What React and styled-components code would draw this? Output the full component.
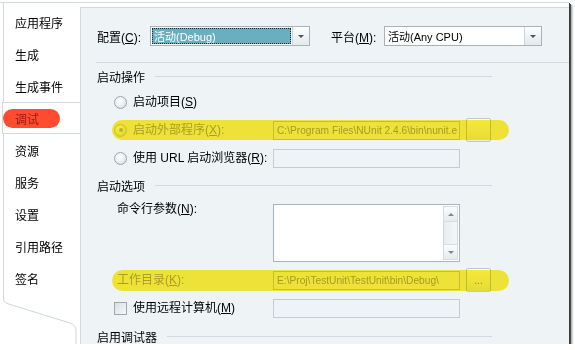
import React from "react";
import styled, { createGlobalStyle, css } from "styled-components";

const GlobalStyle = createGlobalStyle`
  html, body {
    margin: 0;
    padding: 0;
    background: #fff;
  }
  body {
    font-family: "Liberation Sans", "Noto Sans CJK SC", sans-serif;
    font-size: 12px;
    color: #000;
  }
`;

const Window = styled.div`
  width: 569px;
  height: 341px;
  margin-top: 2px;
  border-top: 1px solid #d3dadf;
  display: flex;
  background: #fff;
  box-shadow: 1px 1px 0 #3a3a3a, 2px 2px 0 #4a4a4a, 3px 3px 2px rgba(0, 0, 0, 0.45);
  overflow: hidden;
`;

const Sidebar = styled.nav`
  width: 80px;
  flex: none;
  display: flex;
  flex-direction: column;
`;

const TabList = styled.div`
  margin-left: 3px;
  padding-top: 3px;
  border-left: 1px solid #d3dadf;
  display: flex;
  flex-direction: column;
`;

const Tab = styled.div`
  height: 32px;
  box-sizing: border-box;
  display: flex;
  align-items: center;
  padding-left: 11px;
  white-space: nowrap;
  ${(p) =>
    p.$active &&
    css`
      margin-left: -2px;
      padding-left: 0;
      border: 1px solid #d3dadf;
      border-right: none;
      background: #fff;
    `}
`;

const Marker = styled.span`
  display: inline-flex;
  align-items: center;
  height: 19px;
  padding: 0 21px 0 12px;
  border-radius: 10px;
  background: #ff4b2f;
  color: #8e1f10;
`;

const SidebarFoot = styled.svg`
  display: block;
  flex: 1;
  width: 80px;
`;

const Panel = styled.main`
  flex: 1;
  margin-top: 4px;
  border-top: 1px solid #d3dadf;
  border-left: 1px solid #d3dadf;
  background: #eef3f6;
  padding: 18px 0 0 16px;
  overflow: hidden;
  display: flex;
  flex-direction: column;
`;

const TopRow = styled.div`
  display: flex;
  align-items: center;
  height: 20px;
`;

const Label = styled.span`
  width: ${(p) => p.$w || 53}px;
  margin-left: ${(p) => p.$ml || 0}px;
  flex: none;
  white-space: nowrap;
  color: ${(p) => (p.$disabled ? "#a9a9a9" : "#000")};
`;

const Select = styled.div`
  width: ${(p) => p.$w}px;
  height: 20px;
  box-sizing: border-box;
  border: 1px solid #a9b2ba;
  background: #fff;
  display: flex;
  font-size: 11px;
`;

const SelectValue = styled.div`
  flex: 1;
  display: flex;
  align-items: center;
  padding-left: 3px;
  white-space: nowrap;
  ${(p) =>
    p.$focused &&
    css`
      margin: 1px;
      padding-left: 2px;
      background: #69afc0;
      color: #fff;
      outline: 1px dotted #1a2a30;
      outline-offset: -1px;
    `}
`;

const SelectArrow = styled.div`
  width: 16px;
  flex: none;
  border-left: 1px solid #cdd4d9;
  background: linear-gradient(#fdfefe, #e4e9ec);
  display: flex;
  align-items: center;
  justify-content: center;
  &::after {
    content: "";
    border-left: 3px solid transparent;
    border-right: 3px solid transparent;
    border-top: 3px solid #4b5358;
  }
`;

const Divider = styled.div`
  margin: 16px 0 0 -1px;
  height: 1px;
  background: #d2dadf;
`;

const Section = styled.div`
  width: 395px;
  height: 16px;
  margin-top: ${(p) => p.$mt}px;
  display: flex;
  align-items: center;
  white-space: nowrap;
  &::after {
    content: "";
    flex: 1;
    height: 1px;
    margin-left: 10px;
    background: #d2dadf;
  }
`;

const Row = styled.div`
  position: relative;
  display: flex;
  align-items: ${(p) => (p.$top ? "flex-start" : "center")};
  height: ${(p) => p.$h}px;
  margin-top: ${(p) => p.$mt}px;
`;

const Lead = styled.div`
  width: 176px;
  flex: none;
  box-sizing: border-box;
  padding-left: ${(p) => p.$pl ?? 17}px;
  display: flex;
  align-items: center;
  white-space: nowrap;
  color: ${(p) => (p.$disabled ? "#a9a9a9" : "#000")};
  line-height: 12px;
`;

const Radio = styled.span`
  width: 13px;
  height: 13px;
  margin-right: 6px;
  box-sizing: border-box;
  border-radius: 50%;
  border: 1px solid ${(p) => (p.$disabled ? "#c5ccd1" : "#9ba6ae")};
  background: radial-gradient(circle at 40% 35%, #ffffff 0%, #eef1f3 45%, #cdd4d9 100%);
  display: flex;
  align-items: center;
  justify-content: center;
  &::after {
    content: "";
    display: ${(p) => (p.$checked ? "block" : "none")};
    width: 4px;
    height: 4px;
    border-radius: 50%;
    background: #b8bec3;
  }
`;

const Check = styled.span`
  width: 13px;
  height: 13px;
  margin-right: 6px;
  box-sizing: border-box;
  border: 1px solid #9ca7af;
  background: linear-gradient(135deg, #d9dfe3, #f6f8f9);
`;

const Field = styled.div`
  width: 187px;
  height: ${(p) => p.$h || 19}px;
  flex: none;
  box-sizing: border-box;
  border: 1px solid ${(p) => (p.$white ? "#aab4bc" : "#c4ccd2")};
  background: ${(p) => (p.$white ? "#fff" : "transparent")};
  padding-left: 3px;
  display: flex;
  align-items: ${(p) => (p.$white ? "stretch" : "center")};
  justify-content: ${(p) => (p.$white ? "flex-end" : "flex-start")};
  overflow: hidden;
  white-space: nowrap;
  font-size: 10.2px;
  color: #a6a6a6;
  margin-top: ${(p) => p.$mt || 0}px;
`;

const Scrollbar = styled.div`
  width: 15px;
  margin: 1px;
  box-sizing: border-box;
  border: 1px solid #d0d6db;
  background: linear-gradient(90deg, #e9edf0, #f4f6f7);
  display: flex;
  flex-direction: column;
  justify-content: space-between;
`;

const ScrollBtn = styled.div`
  height: 14px;
  background: linear-gradient(#fbfcfc, #e6eaed);
  border: 1px solid #d6dce0;
  margin: -1px;
  display: flex;
  align-items: center;
  justify-content: center;
  &::after {
    content: "";
    border-left: 3px solid transparent;
    border-right: 3px solid transparent;
    ${(p) =>
      p.$up
        ? css`
            border-bottom: 3px solid #7f888e;
          `
        : css`
            border-top: 3px solid #7f888e;
          `}
  }
`;

const Browse = styled.div`
  width: 25px;
  height: 24px;
  margin-left: 6px;
  flex: none;
  box-sizing: border-box;
  border: 1px solid #c0c8ce;
  border-radius: 2px;
  background: linear-gradient(#f8fafb, #e6ebee);
  display: flex;
  align-items: center;
  justify-content: center;
  font-size: 10px;
  color: #9a9a9a;
`;

const Highlight = styled.span`
  position: absolute;
  left: 15px;
  top: 2px;
  width: 397px;
  height: ${(p) => p.$h}px;
  border-radius: 11px;
  background: #ffee3a;
  mix-blend-mode: multiply;
  pointer-events: none;
`;

const tabs = ["应用程序", "生成", "生成事件", "调试", "资源", "服务", "设置", "引用路径", "签名"];

export default function App() {
  return (
    <>
      <GlobalStyle />
      <Window>
        <Sidebar>
          <TabList>
            {tabs.map((t) =>
              t === "调试" ? (
                <Tab key={t} $active>
                  <Marker>{t}</Marker>
                </Tab>
              ) : (
                <Tab key={t}>{t}</Tab>
              )
            )}
          </TabList>
          <SidebarFoot viewBox="0 0 80 50" preserveAspectRatio="xMinYMin slice">
            <path
              d="M3.5 0 V4 Q3.5 8.5 8 9.8 L70 29 Q76 31 76 37 V60"
              fill="none"
              stroke="#cfd7dc"
              strokeWidth="1"
            />
          </SidebarFoot>
        </Sidebar>

        <Panel>
          <TopRow>
            <Label>
              配置(<u>C</u>):
            </Label>
            <Select $w={160}>
              <SelectValue $focused>活动(Debug)</SelectValue>
              <SelectArrow />
            </Select>
            <Label $ml={21}>
              平台(<u>M</u>):
            </Label>
            <Select $w={158}>
              <SelectValue>活动(Any CPU)</SelectValue>
              <SelectArrow />
            </Select>
          </TopRow>

          <Divider />

          <Section $mt={5}>启动操作</Section>

          <Row $h={20} $mt={8}>
            <Lead>
              <Radio />
              启动项目(<u>S</u>)
            </Lead>
          </Row>

          <Row $h={24} $mt={6}>
            <Lead $disabled>
              <Radio $checked $disabled />
              启动外部程序(<u>X</u>):
            </Lead>
            <Field>C:\Program Files\NUnit 2.4.6\bin\nunit.e</Field>
            <Browse />
            <Highlight $h={20} />
          </Row>

          <Row $h={24} $mt={4}>
            <Lead>
              <Radio />
              使用 URL 启动浏览器(<u>R</u>):
            </Lead>
            <Field />
          </Row>

          <Section $mt={7}>启动选项</Section>

          <Row $h={59} $mt={10} $top>
            <Lead $pl={20}>
              命令行参数(<u>N</u>):
            </Lead>
            <Field $white $h={58} $mt={1}>
              <Scrollbar>
                <ScrollBtn $up />
                <ScrollBtn />
              </Scrollbar>
            </Field>
          </Row>

          <Row $h={24} $mt={6}>
            <Lead $pl={20} $disabled>
              工作目录(<u>K</u>):
            </Lead>
            <Field>E:\Proj\TestUnit\TestUnit\bin\Debug\</Field>
            <Browse>...</Browse>
            <Highlight $h={21} />
          </Row>

          <Row $h={24} $mt={4}>
            <Lead>
              <Check />
              使用远程计算机(<u>M</u>)
            </Lead>
            <Field />
          </Row>

          <Section $mt={8}>启用调试器</Section>
        </Panel>
      </Window>
    </>
  );
}
